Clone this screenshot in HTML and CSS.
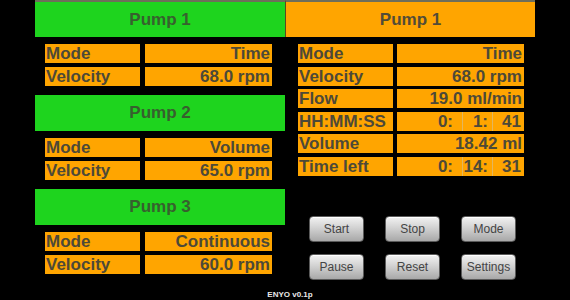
FILE: index.html
```html
<!DOCTYPE html>
<html lang="en">
<head>
    <meta charset="UTF-8">
    <title>ENYO pump control</title>
    <link rel="stylesheet" href="styles.css">
</head>
<body>

<div class="screen">
    <div class="column">
        <div class="header header--green header--top">Pump 1</div>
        <div class="rows">
            <div class="row"><div class="label">Mode</div><div class="value">Time</div></div>
            <div class="row"><div class="label">Velocity</div><div class="value">68.0 rpm</div></div>
        </div>

        <div class="header header--green">Pump 2</div>
        <div class="rows">
            <div class="row"><div class="label">Mode</div><div class="value">Volume</div></div>
            <div class="row"><div class="label">Velocity</div><div class="value">65.0 rpm</div></div>
        </div>

        <div class="header header--green">Pump 3</div>
        <div class="rows">
            <div class="row"><div class="label">Mode</div><div class="value">Continuous</div></div>
            <div class="row"><div class="label">Velocity</div><div class="value">60.0 rpm</div></div>
        </div>
    </div>

    <div class="column column--detail">
        <div class="header header--orange header--top">Pump 1</div>
        <div class="rows rows--detail">
            <div class="row"><div class="label">Mode</div><div class="value">Time</div></div>
            <div class="row"><div class="label">Velocity</div><div class="value">68.0 rpm</div></div>
            <div class="row"><div class="label">Flow</div><div class="value">19.0 ml/min</div></div>
            <div class="row">
                <div class="label">HH:MM:SS</div>
                <div class="value value--split">
                    <span class="cell cell--h">0:</span>
                    <span class="cell cell--m">1:</span>
                    <span class="cell cell--s">41</span>
                </div>
            </div>
            <div class="row"><div class="label">Volume</div><div class="value">18.42 ml</div></div>
            <div class="row">
                <div class="label">Time left</div>
                <div class="value value--split">
                    <span class="cell cell--h">0:</span>
                    <span class="cell cell--m">14:</span>
                    <span class="cell cell--s">31</span>
                </div>
            </div>
        </div>

        <div class="buttons">
            <button class="btn">Start</button>
            <button class="btn">Stop</button>
            <button class="btn">Mode</button>
            <button class="btn">Pause</button>
            <button class="btn">Reset</button>
            <button class="btn">Settings</button>
        </div>
    </div>

    <div class="footer">ENYO v0.1p</div>
</div>

</body>
</html>
```

FILE: styles.css
```css
* {
    margin: 0;
    padding: 0;
    box-sizing: border-box;
}

body {
    width: 570px;
    height: 300px;
    background-color: #000;
    font-family: "Liberation Sans", Arial, sans-serif;
    overflow: hidden;
}

.screen {
    display: grid;
    grid-template-columns: 250px 250px;
    padding-left: 35px;
}

.column {
    display: flex;
    flex-direction: column;
}

.header {
    height: 36px;
    font-size: 17px;
    font-weight: bold;
    display: flex;
    align-items: center;
    justify-content: center;
}

.header--top {
    height: 37px;
    border-top: 2px solid #6e6e5a;
}

.header--green {
    background-color: #1ed41e;
    color: #37602e;
}

.header--orange {
    background-color: #ffa500;
    color: #524c38;
    border-left: 1px solid #5a4a20;
}

.rows {
    display: flex;
    flex-direction: column;
    gap: 4px;
    padding: 7px 13px 9px 10px;
}

.rows:last-child {
    padding-bottom: 0;
}

.rows--detail {
    gap: 3.6px;
    padding: 7px 11px 0 13px;
}

.row {
    display: flex;
    height: 19px;
    gap: 5px;
}

.rows--detail .row {
    gap: 4px;
}

.label,
.value {
    background-color: #ffa500;
    color: #4d4938;
    font-size: 17px;
    font-weight: bold;
    line-height: 19px;
    white-space: nowrap;
}

.label {
    width: 95px;
    padding-left: 1px;
}

.value {
    flex: 1;
    text-align: right;
    padding-right: 2px;
}

.value--split {
    display: flex;
    padding-right: 0;
}

.cell {
    text-align: right;
    padding-right: 3px;
}

.cell--h {
    width: 65px;
    padding-right: 9px;
}

.cell--m {
    width: 30px;
    padding-right: 4px;
    border-left: 1px solid #e2b65e;
}

.cell--s {
    flex: 1;
    border-left: 1px solid #e2b65e;
}

.buttons {
    display: grid;
    grid-template-columns: repeat(3, 55px);
    column-gap: 21px;
    row-gap: 12px;
    padding: 40px 0 0 24px;
}

.btn {
    height: 26px;
    font-family: "Liberation Sans", Arial, sans-serif;
    font-size: 12px;
    color: #444;
    background: linear-gradient(#f2f2f2, #d2d2d2 45%, #a8a8a8);
    border: 1px solid #5a5a5a;
    border-radius: 4px;
    box-shadow: inset 0 1px 0 #fff;
    cursor: pointer;
}

.footer {
    grid-column: 1 / span 2;
    padding: 10px 0 0 10px;
    line-height: 9px;
    text-align: center;
    color: #e8e8e8;
    font-size: 8px;
    font-weight: bold;
}
```
